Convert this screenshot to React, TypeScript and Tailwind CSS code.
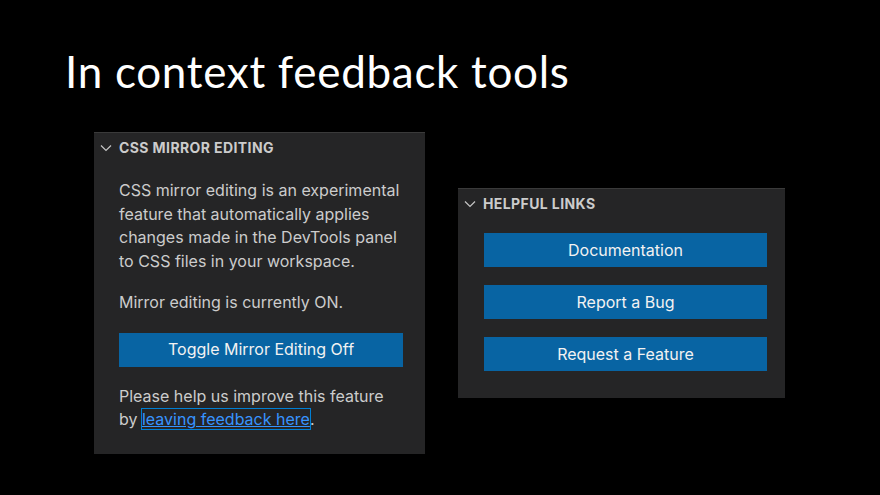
import React from "react";

function Chevron() {
  return (
    <svg width="12" height="8" viewBox="0 0 12 8" className="shrink-0">
      <path d="M1 1.5 L6 6.5 L11 1.5" fill="none" stroke="#c5c5c5" strokeWidth="1.2" />
    </svg>
  );
}

function Header({ title }: { title: string }) {
  return (
    <div className="flex items-center h-[29px] pl-[6px] gap-[7px]">
      <Chevron />
      <span className="text-[14px] font-bold text-[#cccccc] tracking-[0.4px]">{title}</span>
    </div>
  );
}

function Btn({ label }: { label: string }) {
  return (
    <div className="h-[34px] bg-[#0864a3] flex items-center justify-center text-[#f2f2f2] text-[16px]">
      {label}
    </div>
  );
}

export default function App() {
  return (
    <div className="w-[880px] h-[495px] bg-black overflow-hidden" style={{ fontFamily: "Inter, 'Noto Sans', sans-serif" }}>
      <div
        className="pl-[65px] pt-[43px] h-[132px] text-white text-[44px] leading-[56px] tracking-[0.7px]"
        style={{ fontFamily: "'Lato', 'DejaVu Sans', sans-serif", fontWeight: 400 }}
      >
        In context feedback tools
      </div>
      <div className="flex items-start pl-[94px] gap-[33px]">
        <div className="w-[331px] h-[322px] bg-[#252526] border-t border-[#3a3a3a] flex flex-col">
          <Header title="CSS MIRROR EDITING" />
          <div className="pl-[25px] pr-[20px] pt-[17px] text-[16px] leading-[23.7px] text-[#cccccc]">
            <p>
              CSS mirror editing is an experimental feature that automatically applies changes made in the DevTools panel to CSS files in your workspace.
            </p>
            <p className="mt-[17px]">Mirror editing is currently ON.</p>
            <div className="mt-[18px] mr-[2px]">
              <Btn label="Toggle Mirror Editing Off" />
            </div>
            <p className="mt-[18px]">
              Please help us improve this feature by{" "}
              <span className="text-[#3794ff] underline ring-1 ring-[#007fd4]">leaving feedback here</span>.
            </p>
          </div>
        </div>
        <div className="mt-[56px] w-[327px] h-[210px] bg-[#252526] border-t border-[#3a3a3a] flex flex-col">
          <Header title="HELPFUL LINKS" />
          <div className="pl-[26px] pr-[18px] pt-[15px] flex flex-col gap-[18px]">
            <Btn label="Documentation" />
            <Btn label="Report a Bug" />
            <Btn label="Request a Feature" />
          </div>
        </div>
      </div>
    </div>
  );
}
